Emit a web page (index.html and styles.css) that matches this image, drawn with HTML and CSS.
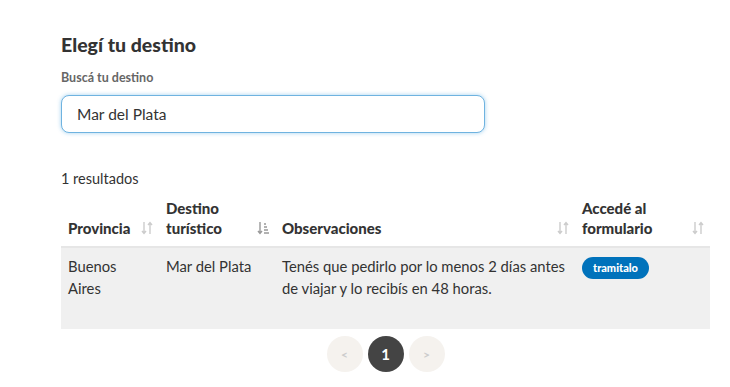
FILE: index.html
```html
<!DOCTYPE html>
<html lang="es">
<head>
    <meta charset="UTF-8">
    <meta name="viewport" content="width=device-width, initial-scale=1.0">
    <title>Elegí tu destino</title>
    <link rel="stylesheet" href="styles.css">
</head>
<body>
    <div class="container">
        <h2>Elegí tu destino</h2>
        <label for="destino">Buscá tu destino</label>
        <input type="text" id="destino" class="search" value="Mar del Plata">

        <p class="count">1 resultados</p>

        <table class="results">
            <colgroup>
                <col class="c-prov">
                <col class="c-dest">
                <col class="c-obs">
                <col class="c-form">
            </colgroup>
            <thead>
                <tr>
                    <th><div class="th-inner"><span>Provincia</span>
                        <svg class="sort" viewBox="0 0 12 14"><path d="M3 1v11M1 10l2 2.5L5 10M9 13V2M7 4l2-2.5L11 4"/></svg></div></th>
                    <th><div class="th-inner"><span>Destino<br>turístico</span>
                        <svg class="sort active" viewBox="0 0 12 14"><path d="M3 1v11M1 10l2 2.5L5 10"/><path d="M7 3h2M7 6h3M7 9h4M7 12h5"/></svg></div></th>
                    <th><div class="th-inner"><span>Observaciones</span>
                        <svg class="sort" viewBox="0 0 12 14"><path d="M3 1v11M1 10l2 2.5L5 10M9 13V2M7 4l2-2.5L11 4"/></svg></div></th>
                    <th><div class="th-inner"><span>Accedé al<br>formulario</span>
                        <svg class="sort" viewBox="0 0 12 14"><path d="M3 1v11M1 10l2 2.5L5 10M9 13V2M7 4l2-2.5L11 4"/></svg></div></th>
                </tr>
            </thead>
            <tbody>
                <tr>
                    <td class="prov">Buenos Aires</td>
                    <td>Mar del Plata</td>
                    <td>Tenés que pedirlo por lo menos 2 días antes de viajar y lo recibís en 48 horas.</td>
                    <td><a href="#" class="badge">tramitalo</a></td>
                </tr>
            </tbody>
        </table>

        <nav class="pager">
            <span class="page-btn">&lt;</span>
            <span class="page-btn current">1</span>
            <span class="page-btn">&gt;</span>
        </nav>
    </div>
</body>
</html>
```

FILE: styles.css
```css
body {
    font-family: Lato, "Open Sans", sans-serif;
    background-color: #fff;
    color: #333;
    margin: 0;
    padding: 0;
}

.container {
    padding: 33px 20px 0 61px;
    width: 649px;
}

h2 {
    margin: 0 0 14px;
    font-size: 19.5px;
    font-weight: 900;
    color: #333;
}

label {
    display: block;
    font-size: 12.5px;
    font-weight: 700;
    color: #666;
    margin-bottom: 10px;
}

.search {
    box-sizing: border-box;
    width: 424px;
    height: 38px;
    padding: 0 15px;
    border: 1px solid #6fb3e0;
    border-radius: 8px;
    box-shadow: 0 0 4px rgba(52, 152, 219, 0.45);
    font-family: inherit;
    font-size: 15.5px;
    color: #333;
    outline: none;
}

.count {
    margin: 37px 0 11px;
    font-size: 14.5px;
}

.results {
    width: 649px;
    border-collapse: collapse;
    table-layout: fixed;
}

.c-prov { width: 98px; }
.c-dest { width: 116px; }
.c-obs { width: 300px; }
.c-form { width: 135px; }

.results th {
    text-align: left;
    vertical-align: bottom;
    font-size: 15px;
    font-weight: 900;
    line-height: 20px;
    padding: 0 6px 8px 7px;
    border-bottom: 2px solid #e6e6e6;
}

.th-inner {
    display: flex;
    justify-content: space-between;
    align-items: flex-end;
}

.sort {
    width: 12px;
    height: 14px;
    margin-bottom: 3px;
    fill: none;
    stroke: #ccc;
    stroke-width: 1.4;
}

.sort.active {
    stroke: #999;
}

.results td {
    background-color: #f0f0f0;
    vertical-align: top;
    font-size: 14.8px;
    line-height: 22px;
    padding: 7px 2px 30px 7px;
}

.results td.prov {
    padding-right: 10px;
}

.badge {
    display: inline-block;
    background-color: #0072bb;
    color: #fff;
    font-size: 11px;
    font-weight: 900;
    line-height: 22px;
    padding: 0 11px;
    border-radius: 11px;
    text-decoration: none;
}

.pager {
    display: flex;
    justify-content: center;
    gap: 5px;
    margin: 7px 0 0;
}

.page-btn {
    width: 36px;
    height: 36px;
    border-radius: 50%;
    background-color: #f5f2ee;
    color: #ccc;
    font-size: 12px;
    font-weight: 700;
    display: flex;
    align-items: center;
    justify-content: center;
}

.page-btn.current {
    background-color: #444;
    color: #fff;
    font-size: 15px;
}
```
